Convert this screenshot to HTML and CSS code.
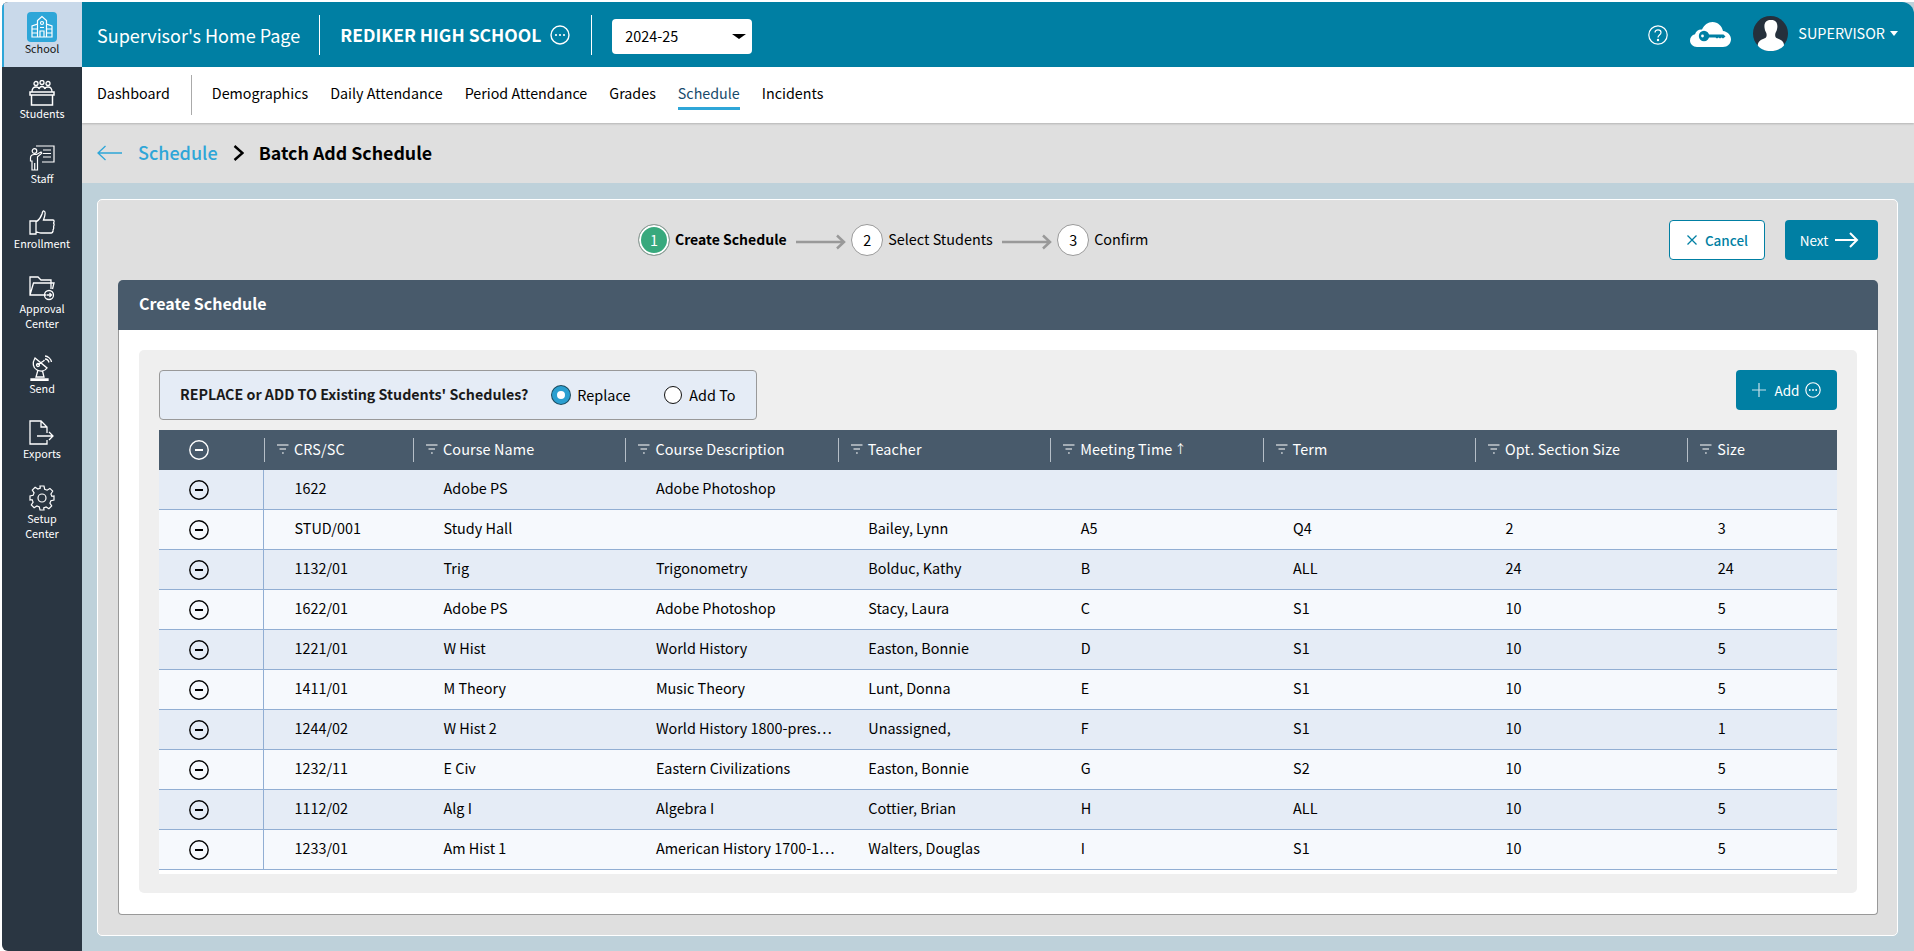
FILE: index.html
```html
<!DOCTYPE html>
<html lang="en">
<head>
<meta charset="utf-8">
<title>Batch Add Schedule</title>
<link rel="stylesheet" href="styles.css">
</head>
<body>
<svg class="defs" width="0" height="0" aria-hidden="true">
  <symbol id="minus" viewBox="0 0 20 20"><circle cx="10" cy="10" r="9.200" fill="none" stroke="currentColor" stroke-width="1.400"/><path d="M6 10h8" stroke="currentColor" stroke-width="2"/></symbol>
  <symbol id="filter" viewBox="0 0 12 12"><path d="M0 2h11.500M2.500 6h6.500M5 10h1.800" fill="none" stroke="currentColor" stroke-width="1.200"/></symbol>
  <symbol id="dots" viewBox="0 0 20 20"><circle cx="10" cy="10" r="9" fill="none" stroke="currentColor" stroke-width="1.400"/><circle cx="6" cy="10" r="1.100" fill="currentColor"/><circle cx="10" cy="10" r="1.100" fill="currentColor"/><circle cx="14" cy="10" r="1.100" fill="currentColor"/></symbol>
  <symbol id="step-arrow" viewBox="0 0 50 16"><path d="M0 8h48M41 1.500l7 6.500-7 6.500" fill="none" stroke="currentColor" stroke-width="2.500"/></symbol>
</svg>
<div class="app">
  <aside class="rail">
    <a class="rail-item active">
      <span class="tile"><svg width="24" height="24" viewBox="0 0 24 24" fill="none" stroke="#fff" stroke-width="1.200"><path d="M12 1.500 7.500 5.500V9L2 11v11h20V11l-5.500-2V5.500zM2 14h5.500M16.500 14H22M2 18h5.500M16.500 18H22M7.500 9v13M16.500 9v13M10 22v-6h4v6"/><circle cx="12" cy="8" r="1.500"/><path d="M10 12.500h4"/></svg></span>
      <span class="rail-label">School</span>
    </a>
    <a class="rail-item">
      <svg class="ico" width="26" height="26" viewBox="0 0 26 26" fill="none" stroke="#fff" stroke-width="1.300"><circle cx="7" cy="3.500" r="2"/><circle cx="13" cy="2.500" r="2"/><circle cx="19" cy="3.500" r="2"/><path d="M3 12c0-4 2-5 4-5s3 1 3 2c.5-1.500 1.500-2.500 3-2.500s2.500 1 3 2.500c0-1 1-2 3-2s4 1 4 5"/><path d="M1 12h24v3H1zM2.500 15v10h21V15" stroke-width="1.500"/></svg>
      <span class="rail-label">Students</span>
    </a>
    <a class="rail-item">
      <svg class="ico" width="26" height="26" viewBox="0 0 26 26" fill="none" stroke="#fff" stroke-width="1.200"><path d="M7 1h18v16H13M14 5h8M14 8.500h8M14 12h8"/><circle cx="5.500" cy="6" r="2.300"/><path d="M1.500 13c0-2 1.500-3.500 4-3.500h2L12 7l.8 1.200-4.300 3.700V25H3v-9H1.500zM5.700 18v7"/></svg>
      <span class="rail-label">Staff</span>
    </a>
    <a class="rail-item">
      <svg class="ico" width="26" height="26" viewBox="0 0 26 26" fill="none" stroke="#fff" stroke-width="1.300"><path d="M1 11h6v13H1zM7 12c3-2 5-5 6-8 .5-2 1-3.500 2-3 2 .8 1 5-.5 9H24c1.500 0 1.500 3 0 3 1.500 0 1.500 3.500 0 3.500 1 0 1 3.500-.5 3.500.8 0 .8 3-1 3H12c-2 0-3-1-5-1"/></svg>
      <span class="rail-label">Enrollment</span>
    </a>
    <a class="rail-item">
      <svg class="ico" width="26" height="26" viewBox="0 0 26 26" fill="none" stroke="#fff" stroke-width="1.300"><path d="M17 20H1V2h8l3 3h10v9M1 20 4.500 8H25l-1.500 6"/><circle cx="20" cy="20" r="4.500"/><path d="M17.500 20h5M20.500 18l2 2-2 2"/></svg>
      <span class="rail-label">Approval<br>Center</span>
    </a>
    <a class="rail-item">
      <svg class="ico" width="26" height="26" viewBox="0 0 26 26" fill="none" stroke="#fff" stroke-width="1.300"><path d="M6 3c-3 5-2 10 2 12s8 1 10-2zM8.500 10l6-4M14.500 6l1-1M16 1c3 0 6 3 6.500 6M16 4c2 0 3.500 1.500 4 3.500"/><circle cx="9" cy="10" r="1.500"/><path d="M9 15l-2 7h8l-1.500-6M2 24h17v1.500H2z"/></svg>
      <span class="rail-label">Send</span>
    </a>
    <a class="rail-item">
      <svg class="ico" width="26" height="26" viewBox="0 0 26 26" fill="none" stroke="#fff" stroke-width="1.300"><path d="M18 13V7l-6-6H1v23h17v-4M12 1v6h6M8 16h16M20 12l4 4-4 4"/></svg>
      <span class="rail-label">Exports</span>
    </a>
    <a class="rail-item">
      <svg class="ico" width="26" height="26" viewBox="0 0 26 26" fill="none" stroke="#fff" stroke-width="1.200"><circle cx="13" cy="13" r="4"/><path d="M11 1h4l.7 3.200 2.400 1 2.800-1.800 2.800 2.800-1.800 2.800 1 2.400L25 11v4l-3.100.7-1 2.400 1.800 2.800-2.800 2.800-2.800-1.800-2.400 1L15 25h-4l-.7-3.100-2.400-1-2.800 1.800-2.800-2.800 1.800-2.800-1-2.400L1 15v-4l3.100-.7 1-2.400-1.800-2.800 2.800-2.800 2.800 1.800 2.400-1z"/></svg>
      <span class="rail-label">Setup<br>Center</span>
    </a>
  </aside>
  <div class="main">
    <header class="topbar">
      <h1 class="page-title">Supervisor's Home Page</h1>
      <div class="school">
        <span class="school-name">REDIKER HIGH SCHOOL</span>
        <svg class="school-more" width="20" height="20"><use href="#dots"/></svg>
      </div>
      <div class="year-wrap">
        <div class="year"><span>2024-25</span><i class="caret"></i></div>
      </div>
      <div class="top-right">
        <svg class="help" width="20" height="20" viewBox="0 0 20 20" fill="none" stroke="#fff" stroke-width="1.200"><circle cx="10" cy="10" r="9.200"/><path d="M7 7.500C7 5.500 8.500 4.800 10 4.800s3 1 3 2.700c0 2.500-3 2.500-3 5"/><circle cx="10" cy="15" r=".6" fill="#fff"/></svg>
        <svg class="cloud" width="41" height="25" viewBox="0 0 41 25"><path fill="#fff" d="M7 25C3 25 0 22 0 18.500c0-3.200 2-5.500 5-6.300C6 8.800 9 7 12 7.500 14 3 18 0 22.500 0 28 0 32 4 33 9c4.500 .5 8 4 8 8.300 0 4.500-3.500 7.700-8 7.700z"/><circle cx="14" cy="14" r="5.200" fill="#007fa3"/><circle cx="12.500" cy="14" r="1.400" fill="#fff"/><path fill="#007fa3" d="M18 12.500h15.500l2 2-2.500 2-1.500-1-1.500 1-1.500-1-1.500 1-1.500-1H18z"/></svg>
        <svg class="avatar" width="35" height="35" viewBox="0 0 35 35"><circle cx="17.500" cy="17.500" r="17.500" fill="#25303c"/><path fill="#fff" d="M17.500 4c-4.500 0-6.500 3-6 7.500.3 2.500 1 4 1.800 5.500.6 1.500.5 4-1 5-2 1.300-5 1.500-6.500 4-.6 1-1 2-1 3.500C7 33 12 35 17.500 35S28 33 31 29.500c0-1.500-.4-2.500-1-3.500-1.500-2.500-4.500-2.700-6.500-4-1.500-1-1.600-3.500-1-5 .8-1.500 1.500-3 1.800-5.500.5-4.500-1.500-7.500-5.800-7.500z"/></svg>
        <span class="user">SUPERVISOR</span>
        <i class="caret white"></i>
      </div>
    </header>
    <nav class="tabs">
      <a class="tab home">Dashboard</a>
      <span class="tab-sep"></span>
      <a class="tab">Demographics</a>
      <a class="tab">Daily Attendance</a>
      <a class="tab">Period Attendance</a>
      <a class="tab">Grades</a>
      <a class="tab current">Schedule</a>
      <a class="tab">Incidents</a>
    </nav>
    <div class="crumbs">
      <svg class="back" width="26" height="16" viewBox="0 0 26 16" fill="none" stroke="#2ea6d8" stroke-width="1.300"><path d="M25 8H1M8.500 1 1 8l7.500 7"/></svg>
      <a class="crumb-link">Schedule</a>
      <svg class="chev" width="11" height="16" viewBox="0 0 11 16" fill="none" stroke="#000" stroke-width="2.400"><path d="m1.500 1 8 7-8 7"/></svg>
      <strong class="crumb-now">Batch Add Schedule</strong>
    </div>
    <main class="content">
      <section class="card">
        <div class="toolbar">
          <ol class="steps">
            <li class="step on"><span class="num">1</span><span class="step-label">Create Schedule</span></li>
            <li class="arrow"><svg width="50" height="16"><use href="#step-arrow"/></svg></li>
            <li class="step"><span class="num">2</span><span class="step-label">Select Students</span></li>
            <li class="arrow"><svg width="50" height="16"><use href="#step-arrow"/></svg></li>
            <li class="step"><span class="num">3</span><span class="step-label">Confirm</span></li>
          </ol>
          <div class="actions">
            <button class="btn outline"><svg width="12" height="12" viewBox="0 0 12 12" stroke="currentColor" stroke-width="1.300"><path d="m1.500 1.500 9 9M10.500 1.500l-9 9"/></svg>Cancel</button>
            <button class="btn solid next">Next<svg width="24" height="16" viewBox="0 0 24 16" fill="none" stroke="#fff" stroke-width="2"><path d="M0 8h22M15 1l7 7-7 7"/></svg></button>
          </div>
        </div>
        <section class="panel">
          <h2 class="panel-head">Create Schedule</h2>
          <div class="panel-body">
            <div class="well">
              <div class="well-top">
                <div class="mode">
                  <span class="mode-q">REPLACE or ADD TO Existing Students' Schedules?</span>
                  <label class="radio"><span class="dot checked"></span>Replace</label>
                  <label class="radio"><span class="dot"></span>Add To</label>
                </div>
                <button class="btn solid add"><svg width="14" height="14" viewBox="0 0 14 14" stroke="#c8e2ec" stroke-width="1.200"><path d="M7 0v14M0 7h14"/></svg>Add<svg width="16" height="16"><use href="#dots"/></svg></button>
              </div>
              <div class="table-wrap">
                <table class="grid">
                  <colgroup><col class="c-a"><col class="c-b"><col class="c-c"><col class="c-c"><col class="c-c"><col class="c-c"><col class="c-c"><col class="c-c"><col></colgroup>
                  <thead>
                    <tr>
                      <th class="act"><svg width="20" height="20"><use href="#minus"/></svg></th>
                      <th><span class="th-in"><svg width="12" height="12"><use href="#filter"/></svg>CRS/SC</span></th>
                      <th><span class="th-in"><svg width="12" height="12"><use href="#filter"/></svg>Course Name</span></th>
                      <th><span class="th-in"><svg width="12" height="12"><use href="#filter"/></svg>Course Description</span></th>
                      <th><span class="th-in"><svg width="12" height="12"><use href="#filter"/></svg>Teacher</span></th>
                      <th><span class="th-in"><svg width="12" height="12"><use href="#filter"/></svg>Meeting Time<em class="sort">↑</em></span></th>
                      <th><span class="th-in"><svg width="12" height="12"><use href="#filter"/></svg>Term</span></th>
                      <th><span class="th-in"><svg width="12" height="12"><use href="#filter"/></svg>Opt. Section Size</span></th>
                      <th><span class="th-in"><svg width="12" height="12"><use href="#filter"/></svg>Size</span></th>
                    </tr>
                  </thead>
                  <tbody>
                    <tr><td class="act"><svg width="20" height="20"><use href="#minus"/></svg></td><td>1622</td><td>Adobe PS</td><td>Adobe Photoshop</td><td></td><td></td><td></td><td></td><td></td></tr>
                    <tr><td class="act"><svg width="20" height="20"><use href="#minus"/></svg></td><td>STUD/001</td><td>Study Hall</td><td></td><td>Bailey, Lynn</td><td>A5</td><td>Q4</td><td>2</td><td>3</td></tr>
                    <tr><td class="act"><svg width="20" height="20"><use href="#minus"/></svg></td><td>1132/01</td><td>Trig</td><td>Trigonometry</td><td>Bolduc, Kathy</td><td>B</td><td>ALL</td><td>24</td><td>24</td></tr>
                    <tr><td class="act"><svg width="20" height="20"><use href="#minus"/></svg></td><td>1622/01</td><td>Adobe PS</td><td>Adobe Photoshop</td><td>Stacy, Laura</td><td>C</td><td>S1</td><td>10</td><td>5</td></tr>
                    <tr><td class="act"><svg width="20" height="20"><use href="#minus"/></svg></td><td>1221/01</td><td>W Hist</td><td>World History</td><td>Easton, Bonnie</td><td>D</td><td>S1</td><td>10</td><td>5</td></tr>
                    <tr><td class="act"><svg width="20" height="20"><use href="#minus"/></svg></td><td>1411/01</td><td>M Theory</td><td>Music Theory</td><td>Lunt, Donna</td><td>E</td><td>S1</td><td>10</td><td>5</td></tr>
                    <tr><td class="act"><svg width="20" height="20"><use href="#minus"/></svg></td><td>1244/02</td><td>W Hist 2</td><td>World History 1800-pres…</td><td>Unassigned,</td><td>F</td><td>S1</td><td>10</td><td>1</td></tr>
                    <tr><td class="act"><svg width="20" height="20"><use href="#minus"/></svg></td><td>1232/11</td><td>E Civ</td><td>Eastern Civilizations</td><td>Easton, Bonnie</td><td>G</td><td>S2</td><td>10</td><td>5</td></tr>
                    <tr><td class="act"><svg width="20" height="20"><use href="#minus"/></svg></td><td>1112/02</td><td>Alg I</td><td>Algebra I</td><td>Cottier, Brian</td><td>H</td><td>ALL</td><td>10</td><td>5</td></tr>
                    <tr><td class="act"><svg width="20" height="20"><use href="#minus"/></svg></td><td>1233/01</td><td>Am Hist 1</td><td>American History 1700-1…</td><td>Walters, Douglas</td><td>I</td><td>S1</td><td>10</td><td>5</td></tr>
                  </tbody>
                </table>
              </div>
            </div>
          </div>
        </section>
      </section>
    </main>
  </div>
</div>
</body>
</html>
```
FILE: styles.css
```css
* { box-sizing: border-box; }
html, body { height: 100%; margin: 0; }
body {
  padding: 2px 0 0 2px;
  background: #fff;
  overflow: hidden;
  font-family: "Noto Sans CJK KR", "Noto Sans", sans-serif;
  font-size: 14.400px;
  line-height: 20px;
  color: #000;
}
.defs { position: absolute; }
a { color: inherit; text-decoration: none; }
h1, h2, ol { margin: 0; padding: 0; font-weight: 400; list-style: none; }
button { font: inherit; cursor: pointer; }

.app { display: flex; height: 949px; }

/* rail */
.rail {
  width: 80px;
  flex: none;
  background: #2a3642;
  border-radius: 6px 0 0 6px;
  overflow: hidden;
  color: #fff;
  font-size: 10.800px;
  line-height: 15px;
  text-align: center;
}
.rail-item { display: flex; flex-direction: column; align-items: center; height: 65px; padding-top: 13px; }
.rail-item .ico { flex: none; }
.rail-item:nth-child(5), .rail-item:nth-child(8) { height: 80px; }
.rail-item.active {
  padding-top: 10px;
  background: #c9d9ea;
  border-left: 2px solid #2ea6d8;
  color: #111;
}
.tile { display: flex; align-items: center; justify-content: center; width: 30px; height: 30px; border-radius: 4px; background: #2ea6d8; margin-left: -2px; }
.active .rail-label { margin: -1px 0 0 -2px; }

/* main */
.main { flex: 1; min-width: 0; display: flex; flex-direction: column; background: #bed1da; }
.topbar {
  height: 65px;
  flex: none;
  display: flex;
  align-items: center;
  padding-left: 15px;
  background: #007fa3;
  color: #fff;
  border-top-right-radius: 12px;
}
.page-title { font-size: 18px; line-height: 24px; padding-right: 19px; border-right: 1px solid #fff; height: 40px; display: flex; align-items: center; }
.school { display: flex; align-items: center; height: 40px; padding: 0 21px 0 20px; border-right: 1px solid #fff; }
.school-name { font-size: 17.500px; font-weight: 600; }
.school-more { margin-left: 9px; color: #fff; }
.year-wrap { padding: 3px 0 0 20px; }
.year { display: flex; align-items: center; justify-content: space-between; width: 140px; height: 35px; padding: 0 6px 0 13px; background: #fff; border-radius: 4px; color: #000; }
.caret { display: block; width: 0; height: 0; border-left: 7px solid transparent; border-right: 7px solid transparent; border-top: 5px solid #000; }
.caret.white { border-left-width: 4.500px; border-right-width: 4.500px; border-top: 5px solid #fff; }
.top-right { margin-left: auto; display: flex; align-items: center; padding-right: 16px; }
.help { margin-right: 22px; }
.cloud { margin-right: 22px; }
.avatar { margin-right: 10px; margin-top: -2px; }
.user { margin-right: 5px; margin-top: -4px; }
.top-right .caret { margin-top: -3px; }

.tabs {
  height: 56px;
  flex: none;
  display: flex;
  align-items: center;
  padding-left: 15px;
  background: #fff;
  box-shadow: 0 1px 2px rgba(0,0,0,.2);
  position: relative;
  font-size: 14.300px;
}
.tab { position: relative; display: flex; align-items: center; height: 56px; padding-bottom: 4px; margin-right: 22px; }
.tab.home { margin-right: 21px; }
.tab.current { color: #174a6b; }
.tab.current::after { content: ""; position: absolute; left: 0; right: 0; bottom: 13px; height: 3px; background: #2ea6d8; }
.tab-sep { width: 1px; height: 40px; background: #aaa; margin-right: 20px; }

.crumbs { height: 60px; flex: none; display: flex; align-items: center; padding-left: 15px; background: #dfdfdf; font-size: 18px; }
.back { margin-right: 15px; }
.crumb-link { color: #2ea6d8; font-weight: 500; padding-bottom: 2px; }
.chev { margin: 0 15px 0 15px; }
.crumb-now { font-size: 17.800px; font-weight: 600; padding-bottom: 2px; }

.content { flex: 1; padding: 16px 16px 0 15px; }
.card { height: 737px; display: flex; flex-direction: column; background: #dfdfdf; border: 1px solid #fff; border-radius: 5px; padding: 20px 19px 20px 20px; }
.toolbar { height: 40px; flex: none; display: flex; align-items: center; margin-bottom: 20px; padding-left: 520px; }
.steps { display: flex; align-items: center; }
.step { display: flex; align-items: center; }
.num { width: 32px; height: 32px; display: flex; align-items: center; justify-content: center; border-radius: 50%; background: #fff; border: 1px solid #9a9a9a; margin-right: 5px; padding-bottom: 1px; }
.step-label { padding-bottom: 2px; }
.step.on .num { background: #38a97d; color: #fff; box-shadow: inset 0 0 0 2px #fff; }
.step.on .step-label { font-size: 14px; font-weight: 600; }
.arrow { display: flex; color: #999; margin: 3px 5px 0 9.500px; }
.actions { margin-left: auto; display: flex; gap: 20px; }
.btn { display: flex; align-items: center; justify-content: center; height: 40px; border-radius: 4px; }
.outline { width: 96px; gap: 7px; background: #fff; color: #007fa3; border: 1px solid #007fa3; font-weight: 500; font-size: 13.500px; }
.solid { width: 93px; gap: 8px; background: #007fa3; color: #fff; border: 0; font-size: 13.500px; }
.next { padding: 0 4px 0 0; gap: 7px; }

.panel { flex: 1; min-height: 0; display: flex; flex-direction: column; }
.panel-head { height: 50px; flex: none; display: flex; align-items: center; padding: 0 0 4px 21px; background: #485a6b; color: #fff; font-size: 16px; font-weight: 600; border-radius: 5px 5px 0 0; }
.panel-body { flex: 1; background: #fff; border: 1px solid #999; border-top: 0; border-radius: 0 0 4px 4px; padding: 20px; }
.well { height: 543px; background: #efefef; border-radius: 5px; padding: 20px 20px 0; }
.well-top { display: flex; justify-content: space-between; height: 60px; }
.mode { display: flex; align-items: center; width: 598px; height: 50px; padding-left: 20px; background: #e5ecf6; border: 1px solid #999; border-radius: 4px; white-space: nowrap; }
.mode-q { font-size: 14.250px; font-weight: 600; margin-right: 24px; color: #1a1a1a; padding-bottom: 2px; }
.radio { display: flex; align-items: center; margin-right: 34px; }
.dot { width: 18px; height: 18px; margin-right: 7px; border-radius: 50%; background: #fff; border: 1.500px solid #111; }
.dot.checked { background: #fff; border: 5px solid #2a9fd0; box-shadow: 0 0 0 1px #1a4a5e; }
.add { width: 101px; gap: 6px; }
.add svg:first-child { margin-right: 3px; }

.table-wrap { height: 444px; background: #fff; overflow: hidden; }
.grid { width: 100%; table-layout: fixed; border-collapse: separate; border-spacing: 0; }
.c-a { width: 105px; }
.c-b { width: 149px; }
.c-c { width: 212.400px; }
.grid th { height: 40px; padding: 0; background: #485a6b; color: #fff; font-weight: 400; text-align: left; }
.th-in { display: flex; align-items: center; height: 24px; padding: 0 0 2px 12px; border-left: 1px solid #b5bec7; white-space: nowrap; overflow: hidden; letter-spacing: .12px; }
.th-in svg { margin-right: 5px; flex: none; color: #fff; }
.sort { font-style: normal; font-size: 12px; margin-left: 2px; }
.grid td { height: 40px; padding: 0 0 3px 30.500px; border-bottom: 1px solid #91aed3; white-space: nowrap; background: #f6f9fd; }
.grid tbody tr:nth-child(odd) td { background: #e5ecf6; }
.grid td.act, .grid th.act { padding: 0 0 0 30px; }
.grid td.act { border-right: 1px solid #91aed3; }
.act svg { display: block; }
```
